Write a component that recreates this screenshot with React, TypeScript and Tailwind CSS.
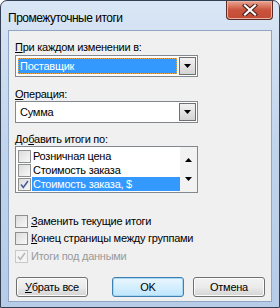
import React from "react";

const font = { fontFamily: '"Liberation Sans", "Noto Sans", sans-serif' };

const Arrow = ({ up = false }: { up?: boolean }) => (
  <svg width="7" height="4" viewBox="0 0 7 4" className={up ? "rotate-180" : ""}>
    <path d="M0 0h7L3.5 4z" fill="#000" />
  </svg>
);

const Combo = ({ value, selected = false }: { value: string; selected?: boolean }) => (
  <div className="flex h-[22px] w-[183px] border border-[#828790] bg-white">
    <div className="flex flex-1 items-center p-[2px]">
      <div
        className={
          selected
            ? "flex h-full w-full items-center border border-dotted border-[#e8a34a] bg-[#3399ff] pl-[1px] text-white"
            : "flex h-full w-full items-center pl-[2px] text-black"
        }
      >
        {value}
      </div>
    </div>
    <div className="my-[1px] mr-[1px] flex w-[17px] items-center justify-center border border-[#707070] bg-gradient-to-b from-[#f2f2f2] to-[#d4d4d4]">
      <Arrow />
    </div>
  </div>
);

const Box = ({ checked = false, disabled = false }: { checked?: boolean; disabled?: boolean }) => (
  <div
    className={
      "flex h-[13px] w-[13px] shrink-0 items-center justify-center border bg-gradient-to-br " +
      (disabled ? "border-[#c8c8c8] from-[#f4f4f4] to-[#f4f4f4]" : "border-[#8e8f8f] from-[#dcdcdc] to-[#f8f8f8]")
    }
  >
    {checked && (
      <svg width="9" height="9" viewBox="0 0 9 9">
        <path
          d="M1 4.5l2.3 3L8 1"
          fill="none"
          stroke={disabled ? "#b8b8b8" : "#4a5f97"}
          strokeWidth="1.6"
        />
      </svg>
    )}
  </div>
);

const Check = ({ label, u, checked, disabled, className }: { label: string; u: number; checked?: boolean; disabled?: boolean; className: string }) => (
  <div className={"flex h-[14px] items-center gap-[3px] " + className}>
    <Box checked={checked} disabled={disabled} />
    <span className={disabled ? "text-[#9a9a9a]" : "text-black"}>
      {u >= 0 ? (
        <>
          {label.slice(0, u)}
          <span className="underline">{label[u]}</span>
          {label.slice(u + 1)}
        </>
      ) : (
        label
      )}
    </span>
  </div>
);

const Btn = ({ children, def = false }: { children: React.ReactNode; def?: boolean }) => (
  <div
    className={
      "flex h-[20px] w-[72px] items-center justify-center rounded-[3px] border text-black " +
      (def
        ? "border-[#3c7fb1] bg-gradient-to-b from-[#eaf6fd] to-[#bee6fd] shadow-[inset_0_0_0_1px_#a7d7f4]"
        : "border-[#707070] bg-gradient-to-b from-[#f2f2f2] via-[#ebebeb] to-[#d3d3d3] shadow-[inset_0_0_0_1px_#fcfcfc]")
    }
  >
    {children}
  </div>
);

export default function App() {
  const rows = [
    { t: "Розничная цена", c: false, s: false },
    { t: "Стоимость заказа", c: false, s: false },
    { t: "Стоимость заказа, $", c: true, s: true },
  ];
  return (
    <div className="h-[308px] w-[280px] bg-white" style={font}>
      <div className="flex h-[308px] w-[280px] flex-col rounded-t-[7px] border border-[#343f52] bg-gradient-to-b from-[#d9e6f5] via-[#bfd3eb] to-[#b6cce7] text-[11px] leading-[14px] tracking-[-0.25px]">
        <div className="flex h-[29px] shrink-0 items-start">
          <div className="mt-[10px] ml-[7px] flex-1 text-[12px] tracking-[-0.5px] text-black">Промежуточные итоги</div>
          <div className="mr-[6px] flex h-[19px] w-[47px] items-center justify-center rounded-b-[4px] border border-t-0 border-[#5a2a24] bg-gradient-to-b from-[#e8a593] via-[#c9533c] to-[#c34c33] shadow-[inset_0_0_0_1px_#eab1a5]">
            <svg width="16" height="12" viewBox="0 0 16 12">
              <path d="M3 1.5l10 9M13 1.5l-10 9" stroke="#45201a" strokeWidth="4.2" strokeLinecap="square" />
              <path d="M3 1.5l10 9M13 1.5l-10 9" stroke="#fff" strokeWidth="2.2" strokeLinecap="square" />
            </svg>
          </div>
        </div>
        <div className="mx-[7px] flex h-[272px] flex-col border border-[#8ea5c4] bg-[#f0f0f0] pl-[6px] text-black">
          <div className="mt-[9px]">
            <span className="underline">П</span>ри каждом изменении в:
          </div>
          <div className="mt-[1px]">
            <Combo value="Поставщик" selected />
          </div>
          <div className="mt-[10px]">
            <span className="underline">О</span>перация:
          </div>
          <div className="mt-[0px]">
            <Combo value="Сумма" />
          </div>
          <div className="mt-[9px]">
            До<span className="underline">б</span>авить итоги по:
          </div>
          <div className="mt-[0px] flex h-[47px] w-[183px] border border-[#828790] bg-white">
            <div className="flex flex-1 flex-col pt-[2px] pl-[1px]">
              {rows.map((r) => (
                <div key={r.t} className="flex h-[14px] items-center">
                  <div className="px-[1px]">
                    <Box checked={r.c} />
                  </div>
                  <div className={"flex h-full flex-1 items-center pl-[1px] " + (r.s ? "bg-[#3399ff] text-white" : "text-black")}>
                    {r.t}
                  </div>
                </div>
              ))}
            </div>
            <div className="flex w-[17px] flex-col items-center justify-between bg-[#f2f2f2] py-[11px] pr-[1px]">
              <Arrow up />
              <Arrow />
            </div>
          </div>
          <Check className="mt-[21px]" label="Заменить текущие итоги" u={0} />
          <Check className="mt-[3px]" label="Конец страницы между группами" u={0} />
          <Check className="mt-[4px]" label="Итоги под данными" u={-1} checked disabled />
          <div className="mt-[14px] flex pl-[1px]">
            <Btn>
              <span className="underline">У</span>брать все
            </Btn>
            <div className="ml-[24px]">
              <Btn def>OK</Btn>
            </div>
            <div className="ml-[9px]">
              <Btn>Отмена</Btn>
            </div>
          </div>
        </div>
      </div>
    </div>
  );
}
